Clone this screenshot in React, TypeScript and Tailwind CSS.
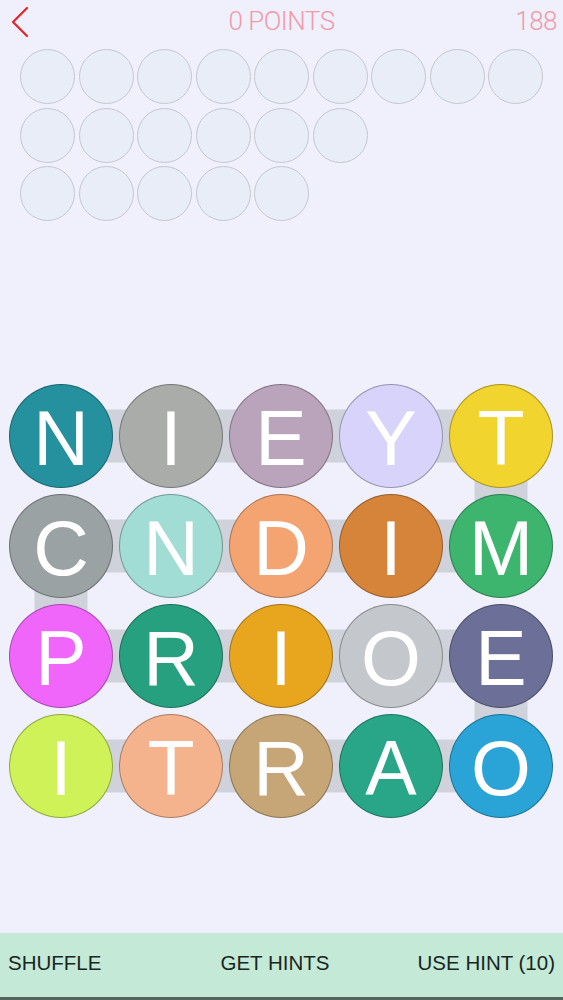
import React from "react";

type Tile = {
  letter: string;
  color: string;
  right?: boolean;
  down?: boolean;
};

const rows: Tile[][] = [
  [
    { letter: "N", color: "bg-[#25919e]", right: true },
    { letter: "I", color: "bg-[#a9aca8]", right: true },
    { letter: "E", color: "bg-[#b9a4bc]", right: true },
    { letter: "Y", color: "bg-[#d8d3fa]", right: true },
    { letter: "T", color: "bg-[#f1d42e]", down: true },
  ],
  [
    { letter: "C", color: "bg-[#9ba2a3]", right: true, down: true },
    { letter: "N", color: "bg-[#a1ddd4]", right: true },
    { letter: "D", color: "bg-[#f4a471]", right: true },
    { letter: "I", color: "bg-[#d7843b]", right: true },
    { letter: "M", color: "bg-[#3db56e]" },
  ],
  [
    { letter: "P", color: "bg-[#f066fa]", right: true },
    { letter: "R", color: "bg-[#27a07f]", right: true },
    { letter: "I", color: "bg-[#e8a51e]", right: true },
    { letter: "O", color: "bg-[#c4c7cb]", right: true },
    { letter: "E", color: "bg-[#6c6f97]", down: true },
  ],
  [
    { letter: "I", color: "bg-[#cef257]", right: true },
    { letter: "T", color: "bg-[#f4b38d]", right: true },
    { letter: "R", color: "bg-[#c6a676]", right: true },
    { letter: "A", color: "bg-[#29a688]", right: true },
    { letter: "O", color: "bg-[#2aa3d6]" },
  ],
];

const slotRows = [9, 6, 5];

function BackChevron() {
  return (
    <svg width="20" height="32" viewBox="0 0 20 32" fill="none">
      <polyline
        points="17,2 3,16 17,30"
        stroke="#e0252c"
        strokeWidth="2.2"
        strokeLinecap="round"
        strokeLinejoin="round"
      />
    </svg>
  );
}

function LetterTile({ tile }: { tile: Tile }) {
  return (
    <div className="relative h-[104px] w-[104px]">
      {tile.right && (
        <div className="absolute left-1/2 top-1/2 z-0 h-[53px] w-[110px] -translate-y-1/2 bg-[#cfd2da]" />
      )}
      {tile.down && (
        <div className="absolute left-1/2 top-1/2 z-0 h-[110px] w-[53px] -translate-x-1/2 bg-[#cfd2da]" />
      )}
      <div
        className={`relative z-10 flex h-[104px] w-[104px] items-center justify-center rounded-full border border-black/30 pt-[5px] text-[77px] leading-none text-white ${tile.color}`}
      >
        {tile.letter}
      </div>
    </div>
  );
}

export default function App() {
  return (
    <div className="relative flex h-[1000px] w-[563px] flex-col overflow-hidden bg-[#eff0fb] font-['Liberation_Sans',Arial,sans-serif]">
      <header className="flex h-[42px] items-center justify-between">
        <div className="flex w-[70px] items-center pl-[10px] pt-[2px]">
          <BackChevron />
        </div>
        <div className="font-['Roboto',sans-serif] text-[26px] font-light tracking-[-0.5px] text-[#f09aa8]">
          0 POINTS
        </div>
        <div className="w-[70px] pr-[6px] text-right font-['Roboto',sans-serif] text-[26px] font-light tracking-[-0.5px] text-[#f09aa8]">
          188
        </div>
      </header>

      <div className="mt-[7px] flex flex-col gap-[3.5px] pl-[20px]">
        {slotRows.map((count, r) => (
          <div key={r} className="flex gap-[3.5px]">
            {Array.from({ length: count }).map((_, i) => (
              <div
                key={i}
                className="h-[55px] w-[55px] rounded-full border border-[#c6c7ce] bg-[#e9edf8]"
              />
            ))}
          </div>
        ))}
      </div>

      <div className="ml-[9px] mt-[163px] grid grid-cols-[repeat(5,104px)] gap-[6px]">
        {rows.map((row, r) =>
          row.map((tile, c) => <LetterTile key={`${r}-${c}`} tile={tile} />)
        )}
      </div>

      <footer className="mt-auto flex h-[67px] items-center justify-between border-b-[3px] border-[#55645b] bg-[#c5e9d7] px-[8px] pb-[3px] text-[20.5px] text-[#17261f]">
        <span>SHUFFLE</span>
        <span className="pl-[31px]">GET HINTS</span>
        <span>USE HINT (10)</span>
      </footer>
    </div>
  );
}
